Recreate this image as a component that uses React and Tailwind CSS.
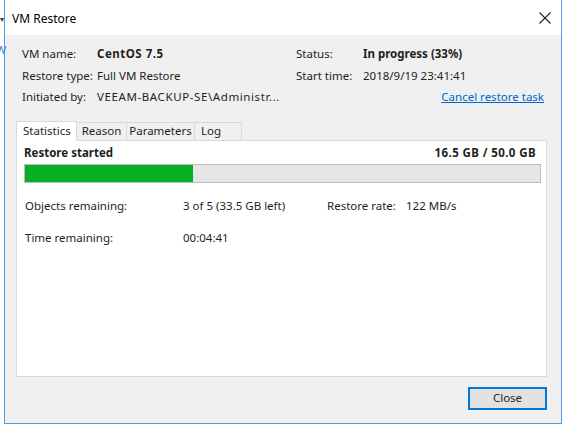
export default function App() {
  const font = { fontFamily: '"Noto Sans", "Liberation Sans", sans-serif' };
  return (
    <div className="relative w-[565px] h-[428px] bg-white text-[11.5px] text-[#1e1e1e] overflow-hidden" style={font}>
      {/* desktop residue left of the window */}
      <div className="absolute left-0 top-[15px] text-[8px] leading-none text-[#333]">▾</div>
      <div className="absolute left-[-4px] top-[44px] text-[11px] leading-none text-[#3b7fd0]">W</div>

      <div className="ml-[4px] w-[558px] h-[424px] flex flex-col border-l border-r border-b border-[#4f9de6]">
        {/* title bar */}
        <div className="h-[35px] bg-white flex items-center justify-between pl-[7px] pr-[8px]">
          <span className="text-[12px] text-black relative top-[1px]">VM Restore</span>
          <svg width="12" height="12" viewBox="0 0 12 12" className="mr-[2px]">
            <path d="M0.5 0.5 L11.5 11.5 M11.5 0.5 L0.5 11.5" stroke="#222" strokeWidth="1.1" />
          </svg>
        </div>

        {/* body */}
        <div className="flex-1 bg-[#f0f0f0] flex flex-col">
          <div className="pt-[8px] pl-[17px] pr-[17px] grid grid-cols-[75px_199px_67px_1fr] auto-rows-[21.5px] items-center">
            <span>VM name:</span>
            <span className="font-bold tracking-[0.5px]">CentOS 7.5</span>
            <span>Status:</span>
            <span className="font-bold">In progress (33%)</span>

            <span>Restore type:</span>
            <span>Full VM Restore</span>
            <span>Start time:</span>
            <span>2018/9/19 23:41:41</span>

            <span>Initiated by:</span>
            <span className="whitespace-nowrap tracking-[0.6px]">VEEAM-BACKUP-SE\Administr...</span>
            <span className="col-span-2 text-right text-[#0066cc] underline">Cancel restore task</span>
          </div>

          {/* tabs */}
          <div className="mt-[12px] ml-[11px] mr-[14px] flex items-end h-[20px]">
            <div className="h-[20px] px-[6px] w-[61px] bg-white border-t border-l border-r border-[#d9d9d9] flex items-center relative top-[1px] z-10">Statistics</div>
            <div className="h-[18px] w-[50px] bg-[#f0f0f0] border-t border-r border-[#d9d9d9] flex items-center justify-center">Reason</div>
            <div className="h-[18px] w-[68px] bg-[#f0f0f0] border-t border-r border-[#d9d9d9] flex items-center justify-center">Parameters</div>
            <div className="h-[18px] w-[47px] bg-[#f0f0f0] border-t border-r border-[#d9d9d9] flex items-center pl-[6px]">Log</div>
          </div>
          <div className="ml-[11px] mr-[14px] h-[237px] bg-white border border-[#d9d9d9] px-[7px] pt-[3px]">
            <div className="flex justify-between font-bold h-[18px] items-center pr-[3px]">
              <span>Restore started</span>
              <span className="tracking-[0.4px]">16.5 GB / 50.0 GB</span>
            </div>
            <div className="mt-[2px] h-[19px] w-[517px] bg-[#e6e6e6] border border-[#bcbcbc]">
              <div className="h-full bg-[#06b025]" style={{ width: '32.7%' }} />
            </div>
            <div className="mt-[14px] flex h-[18px] items-center pl-[1px]">
              <span className="w-[158px]">Objects remaining:</span>
              <span className="w-[144px]">3 of 5 (33.5 GB left)</span>
              <span className="w-[79px]">Restore rate:</span>
              <span>122 MB/s</span>
            </div>
            <div className="mt-[14px] flex h-[18px] items-center pl-[1px]">
              <span className="w-[158px]">Time remaining:</span>
              <span>00:04:41</span>
            </div>
          </div>

          {/* footer */}
          <div className="flex justify-end mr-[14px] mt-[10px]">
            <div className="w-[79px] h-[23px] border-2 border-[#0078d7] bg-[#e1e1e1] flex items-center justify-center">
              Close
            </div>
          </div>
        </div>
      </div>
    </div>
  );
}
